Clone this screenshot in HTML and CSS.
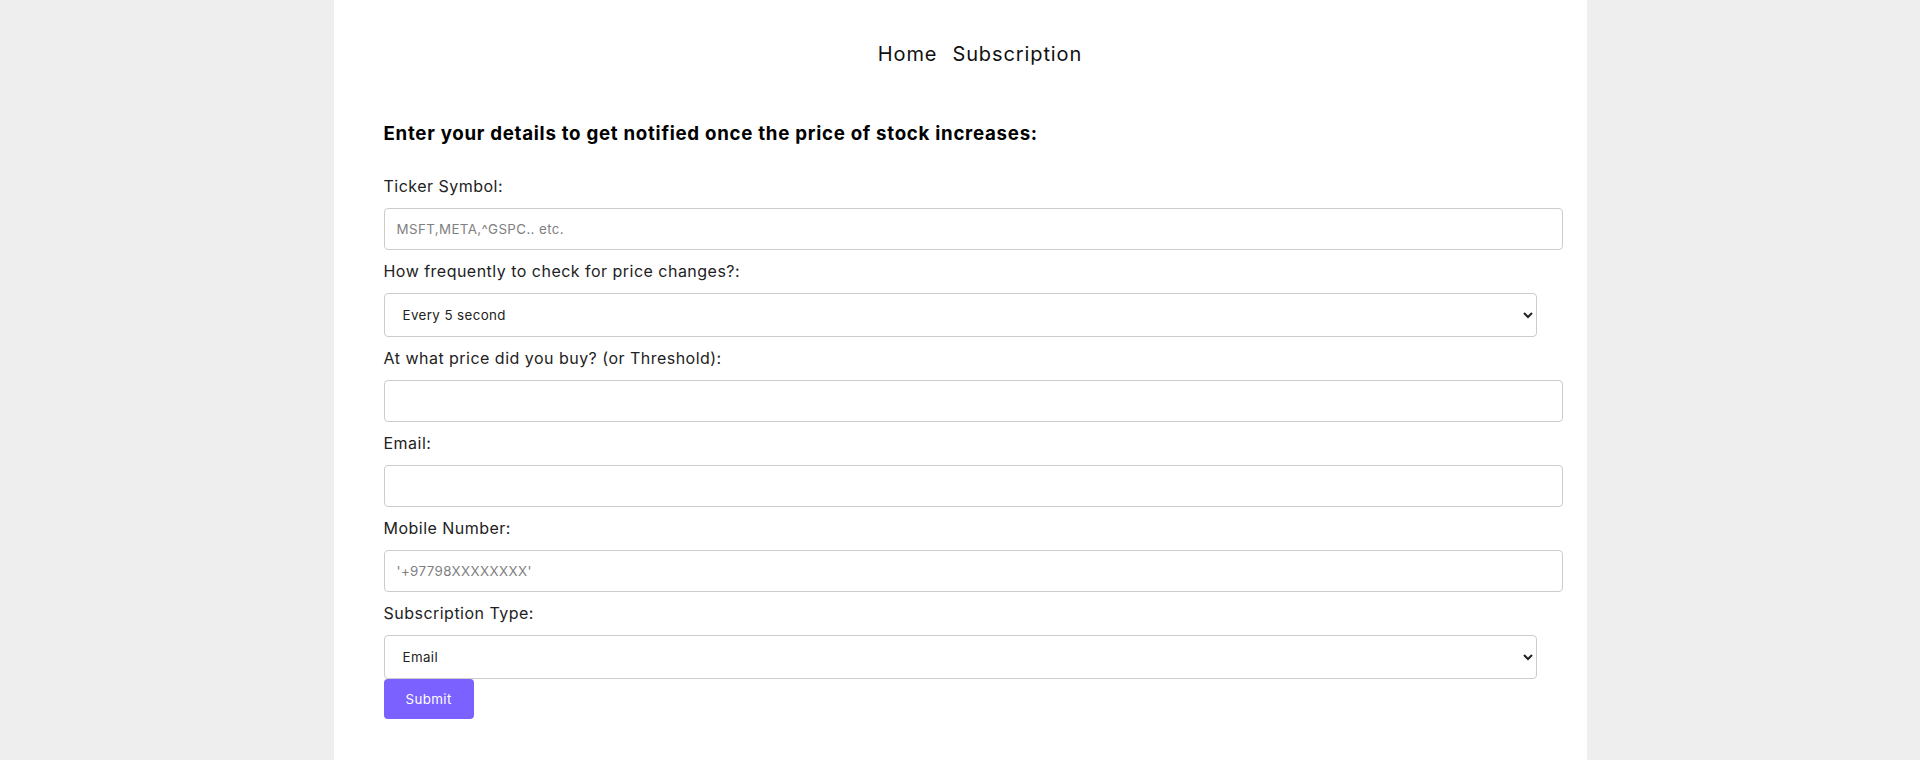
FILE: index.html
```html
<!DOCTYPE html>
<html lang="en">
<head>
<meta charset="utf-8">
<title>Stock Price Notifier</title>
<link rel="stylesheet" href="styles.css">
</head>
<body>
<div class="container">
  <ul class="nav">
    <li><a href="#">Home</a></li>
    <li><a href="#">Subscription</a></li>
  </ul>
  <h3 class="title">Enter your details to get notified once the price of stock increases:</h3>
  <form class="form">
    <label for="ticker">Ticker Symbol:</label>
    <input id="ticker" class="field" type="text" placeholder="MSFT,META,^GSPC.. etc.">
    <label for="freq">How frequently to check for price changes?:</label>
    <select id="freq" class="choice">
      <option>Every 5 second</option>
      <option>Every 1 minute</option>
    </select>
    <label for="price">At what price did you buy? (or Threshold):</label>
    <input id="price" class="field" type="text">
    <label for="email">Email:</label>
    <input id="email" class="field" type="text">
    <label for="mobile">Mobile Number:</label>
    <input id="mobile" class="field" type="text" placeholder="'+97798XXXXXXXX'">
    <label for="stype">Subscription Type:</label>
    <select id="stype" class="choice">
      <option>Email</option>
      <option>SMS</option>
    </select>
    <div class="actions">
      <button type="button" class="submit">Submit</button>
    </div>
  </form>
</div>
</body>
</html>
```
FILE: styles.css
```css
html, body {
  margin: 0;
  padding: 0;
}
body {
  background: #eeeeee;
  font-family: Inter, "Open Sans", "Liberation Sans", sans-serif;
  color: #1e1e1e;
  letter-spacing: 0.03em;
}
.container {
  width: 1153px;
  margin: 0 auto;
  padding: 0 50px;
  min-height: 760px;
  background: #ffffff;
  display: flow-root;
}
.nav {
  list-style: none;
  margin: 42px 0 0;
  padding: 0 0 0 40px;
  display: flex;
  justify-content: center;
  gap: 15px;
  font-size: 20px;
  line-height: 24px;
  letter-spacing: 0.045em;
}
.nav a {
  color: #111;
  text-decoration: none;
}
.title {
  margin: 56px 0 0;
  font-size: 18.72px;
  line-height: 23px;
  font-weight: 700;
  color: #000;
  letter-spacing: 0.038em;
}
.form {
  display: flex;
  flex-direction: column;
  align-items: flex-start;
  margin-top: 20px;
}
.form label {
  display: block;
  font-size: 16px;
  line-height: 20px;
  margin: 11px 0 12px;
  color: #222;
}
.field {
  width: 100%;
  box-sizing: content-box;
  padding: 12px;
  border: 1px solid #cccccc;
  border-radius: 4px;
  font-family: inherit;
  font-size: 13.33px;
  letter-spacing: 0.03em;
  line-height: 16px;
  height: 16px;
  color: #222;
  background: #fff;
  margin: 0;
  outline: none;
}
.field::placeholder {
  color: #808080;
}
.choice {
  width: 100%;
  box-sizing: border-box;
  height: 44px;
  padding: 0 10px 0 14px;
  border: 1px solid #cccccc;
  border-radius: 4px;
  font-family: inherit;
  font-size: 13.33px;
  letter-spacing: 0.03em;
  color: #222;
  background: #fff;
  margin: 0;
}
.actions {
  display: flex;
}
.submit {
  background: #7b61ff;
  color: #fff;
  border: none;
  border-radius: 4px;
  padding: 12px 22px;
  font-family: inherit;
  font-size: 13.33px;
  letter-spacing: 0.03em;
  line-height: 16px;
  cursor: pointer;
}
```
